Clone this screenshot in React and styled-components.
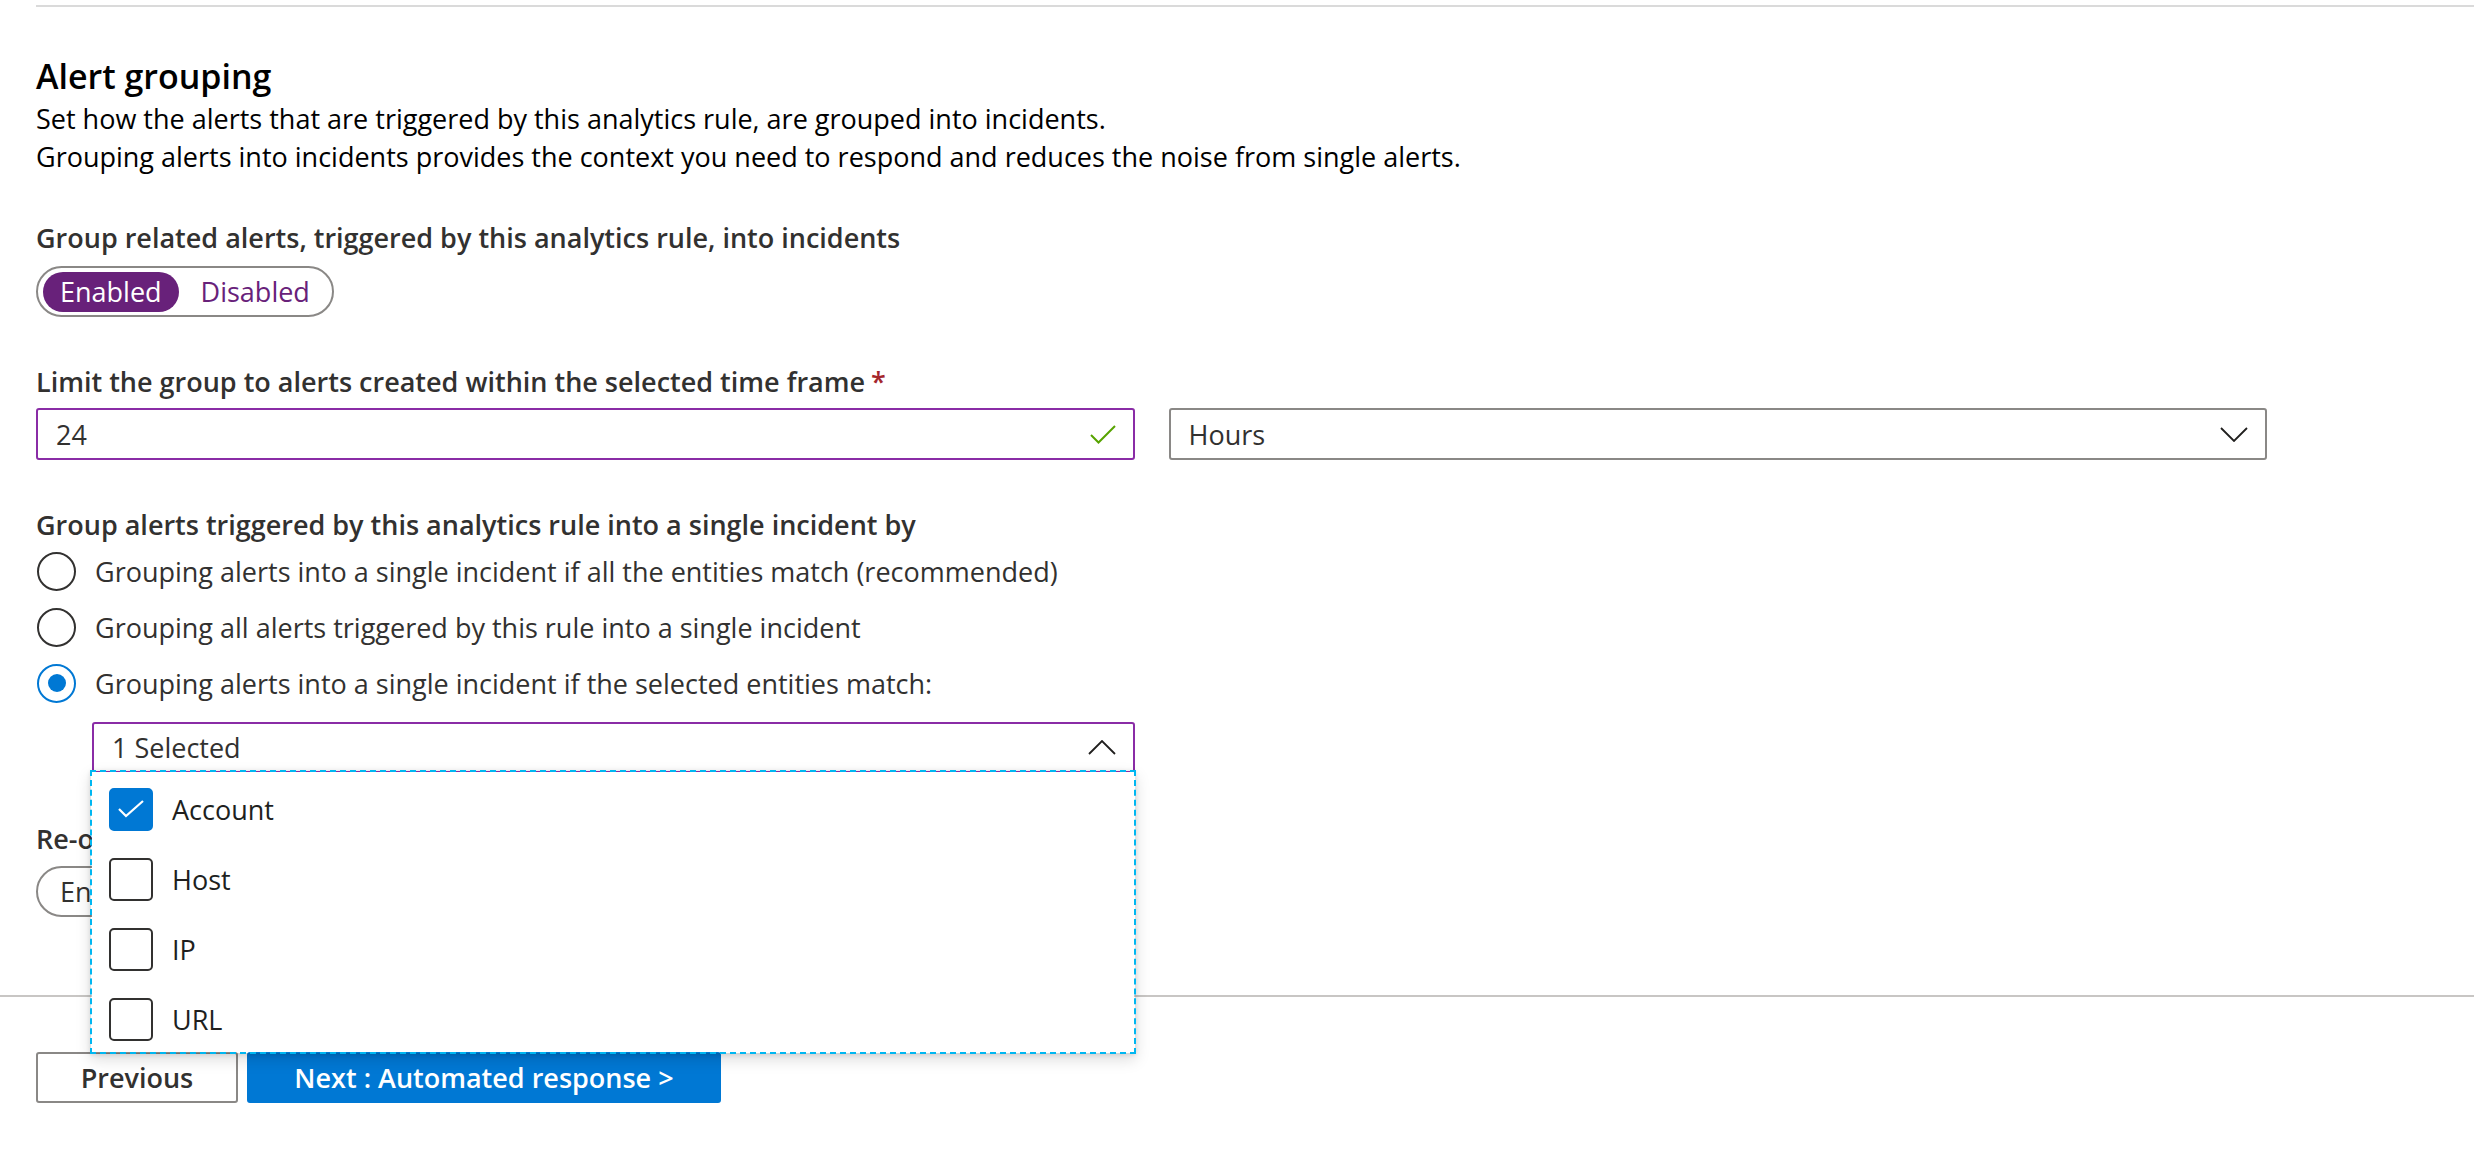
import React from "react";
import styled, { createGlobalStyle } from "styled-components";

const GlobalStyle = createGlobalStyle`
  html, body {
    margin: 0;
    padding: 0;
    background: #fff;
  }
  body {
    font-family: "Open Sans", "Noto Sans", sans-serif;
    color: #323130;
  }
  * { box-sizing: border-box; }
`;

const Page = styled.div`
  width: 2474px;
  height: 1157px;
  overflow: hidden;
  display: flex;
  flex-direction: column;
`;

const TopRule = styled.div`
  height: 2px;
  margin: 5px 0 0 36px;
  background: #dadada;
`;

const Content = styled.section`
  padding: 0 36px;
  display: flex;
  flex-direction: column;
  align-items: flex-start;
`;

const Heading = styled.h2`
  margin: 47px 0 2px;
  font-size: 34px;
  line-height: 44px;
  font-weight: 600;
  color: #000;
`;

const Description = styled.p`
  margin: 0;
  font-size: 27px;
  line-height: 38px;
  color: #000;
`;

const FieldLabel = styled.div`
  margin-top: ${(p) => p.$top}px;
  font-size: 27px;
  line-height: 32px;
  font-weight: 600;
  color: #323130;
  white-space: nowrap;
`;

const Required = styled.span`
  color: #a4262c;
  margin-left: 6px;
`;

const Toggle = styled.div`
  margin-top: ${(p) => p.$top}px;
  display: inline-flex;
  align-items: center;
  gap: 5px;
  height: 51px;
  padding: 0 5px;
  border: 2px solid #8a8886;
  border-radius: 26px;
`;

const ToggleOption = styled.span`
  height: 40px;
  display: flex;
  align-items: center;
  padding: 0 17px;
  border-radius: 20px;
  font-size: 27px;
  background: ${(p) => (p.$active ? "#68217a" : "transparent")};
  color: ${(p) => (p.$active ? "#fff" : p.$muted ? "#323130" : "#68217a")};
`;

const InputsRow = styled.div`
  margin-top: 10px;
  width: 2231px;
  display: grid;
  grid-template-columns: 1fr 1fr;
  gap: 34px;
`;

const Field = styled.div`
  position: relative;
  height: ${(p) => p.$height || 52}px;
  width: ${(p) => (p.$width ? `${p.$width}px` : "auto")};
  margin-left: ${(p) => p.$indent || 0}px;
  margin-top: ${(p) => p.$top || 0}px;
  display: flex;
  align-items: center;
  justify-content: space-between;
  padding: 0 17px 0 18px;
  border: 2px solid ${(p) => (p.$focus ? "#8a2ca6" : "#8a8886")};
  border-radius: 3px;
  font-size: 27px;
  color: #323130;
  background: #fff;
`;

const RadioGroup = styled.div`
  margin-top: 2px;
  display: flex;
  flex-direction: column;
`;

const RadioRow = styled.label`
  height: 56px;
  display: flex;
  align-items: center;
  gap: 19px;
  font-size: 27px;
  color: #323130;
`;

const RadioCircle = styled.span`
  width: 39px;
  height: 39px;
  margin-left: 1px;
  border-radius: 50%;
  border: 2px solid ${(p) => (p.$checked ? "#0078d4" : "#323130")};
  display: flex;
  align-items: center;
  justify-content: center;

  &::after {
    content: "";
    display: ${(p) => (p.$checked ? "block" : "none")};
    width: 18px;
    height: 18px;
    border-radius: 50%;
    background: #0078d4;
  }
`;

const DropdownPanel = styled.div`
  position: absolute;
  z-index: 10;
  top: calc(100% - 1px);
  left: -4px;
  right: -3px;
  height: 284px;
  padding-top: 2px;
  background: #fff;
  background-clip: padding-box;
  border: 2px dashed #00b7f1;
  box-shadow: 0 6px 14px rgba(0, 0, 0, 0.13), 0 1px 4px rgba(0, 0, 0, 0.1);
  display: flex;
  flex-direction: column;
`;

const OptionRow = styled.div`
  height: 70px;
  flex: none;
  display: flex;
  align-items: center;
  gap: 19px;
  padding-left: 17px;
  font-size: 27px;
  color: #201f1e;
`;

const CheckBox = styled.span`
  width: 44px;
  height: 43px;
  border-radius: 5px;
  border: 2px solid ${(p) => (p.$checked ? "#0078d4" : "#323130")};
  background: ${(p) => (p.$checked ? "#0078d4" : "#fff")};
  display: flex;
  align-items: center;
  justify-content: center;
`;

const FooterRule = styled.div`
  margin-top: 78px;
  height: 2px;
  background: #c8c6c4;
`;

const ButtonBar = styled.div`
  margin-top: 55px;
  padding-left: 36px;
  display: flex;
  gap: 9px;
`;

const Button = styled.button`
  height: 51px;
  width: ${(p) => p.$width}px;
  border-radius: 3px;
  font-family: inherit;
  font-size: 27px;
  font-weight: 600;
  border: 2px solid ${(p) => (p.$primary ? "#0078d4" : "#8a8886")};
  background: ${(p) => (p.$primary ? "#0078d4" : "#fff")};
  color: ${(p) => (p.$primary ? "#fff" : "#323130")};
  padding: 0;
`;

const Chevron = ({ up }) => (
  <svg width="28" height="15" viewBox="0 0 28 15" fill="none">
    <path
      d={up ? "M1 14 L14 1 L27 14" : "M1 1 L14 14 L27 1"}
      stroke="#201f1e"
      strokeWidth="1.8"
    />
  </svg>
);

const ValidCheck = () => (
  <svg width="26" height="19" viewBox="0 0 26 19" fill="none">
    <path d="M1 10 L8.5 17.5 L25 1" stroke="#57a300" strokeWidth="2" />
  </svg>
);

const BoxCheck = () => (
  <svg width="28" height="20" viewBox="0 0 28 20" fill="none">
    <path d="M2 10 L9 17 L26 2" stroke="#fff" strokeWidth="2.2" />
  </svg>
);

const groupOptions = [
  "Grouping alerts into a single incident if all the entities match (recommended)",
  "Grouping all alerts triggered by this rule into a single incident",
  "Grouping alerts into a single incident if the selected entities match:",
];

const entities = [
  { name: "Account", checked: true },
  { name: "Host" },
  { name: "IP" },
  { name: "URL" },
];

export default function App() {
  return (
    <Page>
      <GlobalStyle />
      <TopRule />
      <Content>
        <Heading>Alert grouping</Heading>
        <Description>
          Set how the alerts that are triggered by this analytics rule, are grouped into incidents.
          <br />
          Grouping alerts into incidents provides the context you need to respond and reduces the noise from single alerts.
        </Description>

        <FieldLabel $top={46}>Group related alerts, triggered by this analytics rule, into incidents</FieldLabel>
        <Toggle $top={12}>
          <ToggleOption $active>Enabled</ToggleOption>
          <ToggleOption>Disabled</ToggleOption>
        </Toggle>

        <FieldLabel $top={49}>
          Limit the group to alerts created within the selected time frame<Required>*</Required>
        </FieldLabel>
        <InputsRow>
          <Field $focus>
            <span>24</span>
            <ValidCheck />
          </Field>
          <Field>
            <span>Hours</span>
            <Chevron />
          </Field>
        </InputsRow>

        <FieldLabel $top={49}>Group alerts triggered by this analytics rule into a single incident by</FieldLabel>
        <RadioGroup>
          {groupOptions.map((text, i) => (
            <RadioRow key={text}>
              <RadioCircle $checked={i === 2} />
              {text}
            </RadioRow>
          ))}
        </RadioGroup>

        <Field $focus $indent={56} $width={1043} $height={51} $top={11}>
          <span>1 Selected</span>
          <Chevron up />
          <DropdownPanel>
            {entities.map((e) => (
              <OptionRow key={e.name}>
                <CheckBox $checked={e.checked}>{e.checked && <BoxCheck />}</CheckBox>
                {e.name}
              </OptionRow>
            ))}
          </DropdownPanel>
        </Field>

        <FieldLabel $top={50}>Re-open closed matching incidents</FieldLabel>
        <Toggle $top={11}>
          <ToggleOption $muted>Enabled</ToggleOption>
          <ToggleOption $active>Disabled</ToggleOption>
        </Toggle>
      </Content>

      <FooterRule />
      <ButtonBar>
        <Button $width={202}>Previous</Button>
        <Button $primary $width={474}>Next : Automated response &gt;</Button>
      </ButtonBar>
    </Page>
  );
}
